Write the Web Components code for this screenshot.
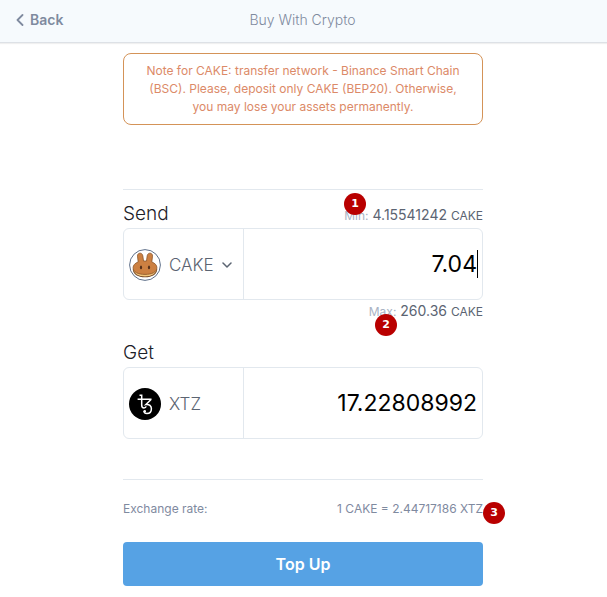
<!DOCTYPE html>
<html lang="en">
<head>
<meta charset="utf-8">
<meta name="viewport" content="width=device-width, initial-scale=1">
<title>Buy With Crypto</title>
<style>
  body{
    margin: 0;
    background: #fff;
    color: #1d2129;
    font-family: Inter, "Liberation Sans", sans-serif;
    --line: #e2e8ee;
    --muted: #7f8a9f;
    --text: #5b6472;
  }
</style>
</head>
<body>
<top-bar back="Back">Buy With Crypto</top-bar>
<exchange-form>
  <network-note slot="note">Note for CAKE: transfer network - Binance Smart Chain (BSC). Please, deposit only CAKE (BEP20). Otherwise, you may lose your assets permanently.</network-note>
  <amount-field label="Send" coin="CAKE" value="7.04" selectable>
    <svg slot="icon" width="32" height="32" viewBox="0 0 32 32" aria-hidden="true">
      <circle cx="16" cy="16" r="15.400" fill="#fff" stroke="#5f708a"/>
      <path d="M3.800 20C3.800 25.500 9 28.300 16 28.300S28.200 25.500 28.200 20z" fill="#6b3f20"/>
      <path d="M4.400 19.500C4.400 24.700 9.500 27.500 16 27.500s11.600-2.800 11.600-8z" fill="#f3c67c"/>
      <path d="M9.200 13 8.500 7.200C8.100 3.400 13.300 3 13.800 6.800l.7 5.200h3l.7-5.200c.5-3.800 5.700-3.400 5.300.4L22.800 13c3.300 1.200 5.100 3.200 5.100 5.800 0 4.500-5.200 6.600-11.900 6.600s-11.900-2.100-11.900-6.600c0-2.600 1.800-4.600 5.100-5.800z" fill="#cc8042" stroke="#8a5428" stroke-width="0.800"/>
      <ellipse cx="12" cy="18.400" rx="1.100" ry="1.900" fill="#57311b"/>
      <ellipse cx="20" cy="18.400" rx="1.100" ry="1.900" fill="#57311b"/>
    </svg>
    <limit-line slot="min" label="Min:" coin="CAKE">4.15541242<step-badge slot="badge" style="--right: 117px; --top: -12px">1</step-badge></limit-line>
    <limit-line slot="max" label="Max:" coin="CAKE">260.36<step-badge slot="badge" style="--right: 86px; --top: 14px">2</step-badge></limit-line>
  </amount-field>
  <amount-field label="Get" coin="XTZ" value="17.22808992">
    <svg slot="icon" width="32" height="32" viewBox="0 0 32 32" aria-hidden="true">
      <circle cx="16" cy="16" r="16" fill="#000"/>
      <g fill="none" stroke="#fff" stroke-width="1.500">
        <path d="M10.500 7.200h2.200v9.800c0 2 .9 3 2.300 3 1.200 0 1.900-.6 2.200-1.600"/>
        <path d="M8.600 11.200h13.200v.6l-5 4.800c3.600-.5 5.600 1.300 5.600 4.200 0 3-2 4.800-4.500 4.800-1.800 0-2.800-.8-2.800-2.300"/>
      </g>
      <circle cx="15.700" cy="23.200" r="1.300" fill="#fff"/>
    </svg>
  </amount-field>
  <rate-line slot="rate" label="Exchange rate:">1 CAKE = 2.44717186 XTZ<step-badge slot="badge" style="--right: -22px; --top: 2px">3</step-badge></rate-line>
  <action-button slot="action">Top Up</action-button>
</exchange-form>

<script>
class TopBar extends HTMLElement{
  constructor(){
    super()
    this.attachShadow({mode: 'open'})
  }

  connectedCallback(){
    this.shadowRoot.innerHTML = `
      <style>
        :host{
          display: grid;
          grid-template-columns: 1fr auto 1fr;
          align-items: center;
          height: 40px;
          padding: 0 18px 2px 16px;
          background: #f6fafd;
          border-bottom: 1px solid #dde1e6;
          box-shadow: 0 1px 1px #f0f0f0;
          color: var(--muted);
          font-size: 14px;
          line-height: 20px;
        }

        a{
          display: flex;
          align-items: center;
          gap: 6px;
          color: inherit;
          font-weight: 600;
          text-decoration: none;
        }

        h1{
          margin: 0;
          font-size: 14px;
          font-weight: 300;
        }
      </style>
      <a href="#">
        <svg width="8" height="12" viewBox="0 0 8 12" fill="none" stroke="currentColor" stroke-width="1.800" stroke-linecap="round" stroke-linejoin="round" aria-hidden="true"><path d="M6.500 1 1.500 6l5 5"/></svg>
        <span>${this.getAttribute('back')}</span>
      </a>
      <h1><slot></slot></h1>
    `
  }
}

class NetworkNote extends HTMLElement{
  constructor(){
    super()
    this.attachShadow({mode: 'open'})
    this.shadowRoot.innerHTML = `
      <style>
        :host{
          display: block;
          padding: 8px 20px;
          border: 1px solid #d49358;
          border-radius: 8px;
          color: #dc8a68;
          font-size: 12px;
          line-height: 18px;
          text-align: center;
        }
      </style>
      <slot></slot>
    `
  }
}

class StepBadge extends HTMLElement{
  constructor(){
    super()
    this.attachShadow({mode: 'open'})
    this.shadowRoot.innerHTML = `
      <style>
        :host{
          position: absolute;
          top: var(--top);
          right: var(--right);
          width: 22px;
          border-radius: 50%;
          background: #b90000;
          color: #fff;
          font: bold 11px/22px "DejaVu Sans", sans-serif;
          text-align: center;
        }
      </style>
      <slot></slot>
    `
  }
}

class LimitLine extends HTMLElement{
  constructor(){
    super()
    this.attachShadow({mode: 'open'})
  }

  connectedCallback(){
    this.shadowRoot.innerHTML = `
      <style>
        :host{
          display: block;
          position: relative;
          color: var(--text);
          font-size: 14px;
          line-height: 20px;
          text-align: right;
        }

        .label{
          color: #a9b3c4;
        }

        .label,
        .coin{
          font-size: 12px;
        }
      </style>
      <span class="label">${this.getAttribute('label')}</span>
      <slot></slot>
      <span class="coin">${this.getAttribute('coin')}</span>
      <slot name="badge"></slot>
    `
  }
}

class AmountField extends HTMLElement{
  constructor(){
    super()
    this.attachShadow({mode: 'open'})
  }

  connectedCallback(){
    const selectable = this.hasAttribute('selectable')
    const coin = this.getAttribute('coin')
    const label = this.getAttribute('label')
    this.shadowRoot.innerHTML = `
      <style>
        :host{
          display: block;
        }

        .head{
          display: flex;
          justify-content: space-between;
          align-items: flex-end;
          padding-bottom: 2px;
        }

        .head label{
          font-size: 19px;
          line-height: 24px;
          font-weight: 300;
        }

        .box{
          display: grid;
          grid-template-columns: 120px 1fr;
          box-sizing: border-box;
          height: 72px;
          border: 1px solid var(--line);
          border-radius: 6px;
        }

        .coin{
          display: flex;
          align-items: center;
          gap: 8px;
          padding: 2px 0 0 5px;
          border-right: 1px solid var(--line);
          color: var(--text);
          font-size: 17px;
          font-weight: 300;
        }

        .picker{
          display: flex;
          align-items: center;
          gap: 8px;
        }

        select{
          appearance: none;
          margin: 0;
          padding: 0;
          border: 0;
          background: none;
          color: inherit;
          font: inherit;
        }

        .value{
          display: flex;
          align-items: center;
          min-width: 0;
          padding-right: 5px;
        }

        .caret{
          padding-right: 4px;
        }

        .caret::after{
          content: '';
          width: 1px;
          height: 28px;
          background: #000;
        }

        input{
          flex: 1;
          min-width: 0;
          padding: 0;
          border: 0;
          outline: 0;
          background: none;
          color: #000;
          font: inherit;
          font-size: 23px;
          text-align: right;
        }

        ::slotted([slot="max"]){
          padding-top: 1px;
        }
      </style>
      <div class="head">
        <label for="amount">${label}</label>
        <slot name="min"></slot>
      </div>
      <div class="box">
        <div class="coin">
          <slot name="icon"></slot>
          ${selectable ? `
            <span class="picker">
              <select aria-label="${label} currency"><option>${coin}</option></select>
              <svg width="10" height="6" viewBox="0 0 10 6" fill="none" stroke="currentColor" stroke-width="1.500" stroke-linecap="round" stroke-linejoin="round" aria-hidden="true"><path d="M1 1l4 4 4-4"/></svg>
            </span>
          ` : `<span>${coin}</span>`}
        </div>
        <div class="value ${selectable ? 'caret' : ''}">
          <input id="amount" type="text" inputmode="decimal" value="${this.getAttribute('value')}" ${selectable ? '' : 'readonly'}>
        </div>
      </div>
      <slot name="max"></slot>
    `
  }
}

class RateLine extends HTMLElement{
  constructor(){
    super()
    this.attachShadow({mode: 'open'})
  }

  connectedCallback(){
    this.shadowRoot.innerHTML = `
      <style>
        :host{
          display: flex;
          justify-content: space-between;
          position: relative;
          color: var(--muted);
          font-size: 12px;
          line-height: 18px;
        }
      </style>
      <span>${this.getAttribute('label')}</span>
      <span><slot></slot></span>
      <slot name="badge"></slot>
    `
  }
}

class ActionButton extends HTMLElement{
  constructor(){
    super()
    this.attachShadow({mode: 'open'})
    this.shadowRoot.innerHTML = `
      <style>
        :host{
          display: block;
        }

        button{
          display: block;
          width: 100%;
          height: 44px;
          border: 0;
          border-radius: 4px;
          background: #56a2e4;
          color: #fff;
          font: inherit;
          font-size: 16px;
          font-weight: 600;
          cursor: pointer;
        }
      </style>
      <button type="button"><slot></slot></button>
    `
  }
}

class ExchangeForm extends HTMLElement{
  constructor(){
    super()
    this.attachShadow({mode: 'open'})
    this.shadowRoot.innerHTML = `
      <style>
        :host{
          display: block;
          max-width: 360px;
          margin: 0 auto;
          padding: 10px 1px 10px 0;
        }

        .fields{
          display: flex;
          flex-direction: column;
          gap: 19px;
          margin: 64px 0 20px;
          padding: 12px 0 40px;
          border: 1px solid var(--line);
          border-width: 1px 0;
        }

        .rate{
          margin-bottom: 24px;
        }
      </style>
      <slot name="note"></slot>
      <div class="fields"><slot></slot></div>
      <div class="rate"><slot name="rate"></slot></div>
      <slot name="action"></slot>
    `
  }
}

customElements.define('top-bar', TopBar)
customElements.define('network-note', NetworkNote)
customElements.define('step-badge', StepBadge)
customElements.define('limit-line', LimitLine)
customElements.define('amount-field', AmountField)
customElements.define('rate-line', RateLine)
customElements.define('action-button', ActionButton)
customElements.define('exchange-form', ExchangeForm)
</script>
</body>
</html>
